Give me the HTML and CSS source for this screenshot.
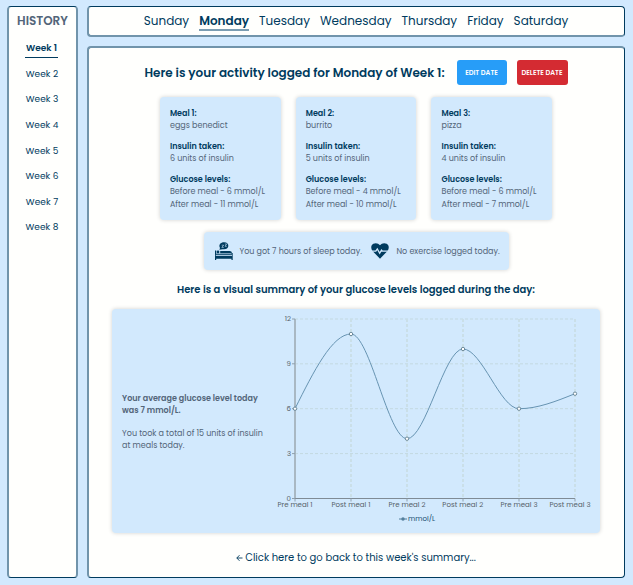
FILE: index.html
```html
<!DOCTYPE html>
<html lang="en">
<head>
<meta charset="utf-8">
<title>Glucose diary</title>
<link rel="stylesheet" href="styles.css">
</head>
<body>
<aside class="sidebar">
  <h2 class="history">HISTORY</h2>
  <ul class="weeks">
    <li><a class="week active">Week 1</a></li>
    <li><a class="week">Week 2</a></li>
    <li><a class="week">Week 3</a></li>
    <li><a class="week">Week 4</a></li>
    <li><a class="week">Week 5</a></li>
    <li><a class="week">Week 6</a></li>
    <li><a class="week">Week 7</a></li>
    <li><a class="week">Week 8</a></li>
  </ul>
</aside>
<div class="content">
  <nav class="days">
    <a>Sunday</a><a class="active">Monday</a><a>Tuesday</a><a>Wednesday</a><a>Thursday</a><a>Friday</a><a>Saturday</a>
  </nav>
  <main class="panel">
    <header class="heading">
      <h1>Here is your activity logged for Monday of Week 1:</h1>
      <button class="btn edit">EDIT DATE</button>
      <button class="btn delete">DELETE DATE</button>
    </header>
    <section class="meals">
      <article class="card meal">
        <h3>Meal 1:</h3><p>eggs benedict</p>
        <h3>Insulin taken:</h3><p>6 units of insulin</p>
        <h3>Glucose levels:</h3><p>Before meal - 6 mmol/L</p><p>After meal - 11 mmol/L</p>
      </article>
      <article class="card meal">
        <h3>Meal 2:</h3><p>burrito</p>
        <h3>Insulin taken:</h3><p>5 units of insulin</p>
        <h3>Glucose levels:</h3><p>Before meal - 4 mmol/L</p><p>After meal - 10 mmol/L</p>
      </article>
      <article class="card meal">
        <h3>Meal 3:</h3><p>pizza</p>
        <h3>Insulin taken:</h3><p>4 units of insulin</p>
        <h3>Glucose levels:</h3><p>Before meal - 6 mmol/L</p><p>After meal - 7 mmol/L</p>
      </article>
    </section>
    <section class="card habits">
      <svg class="icon-bed" viewBox="0 0 18 18">
        <path d="M0 8.4h1.2v3.4h15.3V10.9h1.2V18h-1.2v-1.2H1.2V18H0z"/>
        <circle cx="3" cy="10" r="1.4"/>
        <path d="M5.2 11.2V8.9h9.5q2 0 2.4 2.3z"/>
        <path d="M4.4 7.8 5 5.9C3.2 2.600 5.800.300 9 .300s4.700 1.700 4.300 4S10.800 7.800 7.500 7.200z"/>
        <path class="cut" d="M.8 13.300h16.300"/>
        <path class="cut zzz" d="M6.700 3.200h2L6.800 5.400h2M9.900 2h1.800L10 4.300h1.800"/>
      </svg>
      <p class="sleep">You got 7 hours of sleep today.</p>
      <svg class="icon-heart" viewBox="0 0 18 16">
        <path d="M9 15.700 1.500 8C-.5 5.500 0 2 2.300.8 4.700-.4 7.400.200 9 2.300 10.600.200 13.300-.4 15.700.8 18 2 18.500 5.500 16.500 8z"/>
        <path class="cut pulse" d="M0 8.200h4.800l1.500-2.300 2.400 4.300 1.800-3 .9 1H18"/>
      </svg>
      <p class="exercise">No exercise logged today.</p>
    </section>
    <h2 class="subtitle">Here is a visual summary of your glucose levels logged during the day:</h2>
    <section class="card summary">
      <div class="notes">
        <p class="average">Your average glucose level today<br>was 7 mmol/L.</p>
        <p class="total">You took a total of 15 units of insulin<br>at meals today.</p>
      </div>
      <svg class="chart" viewBox="275 309 325 224">
        <g class="grid">
          <path d="M295 319H575M295 363.800H575M295 408.700H575M295 453.600H575"/>
          <path class="vertical" d="M351 319V498.500M407 319V498.500M463 319V498.500M519 319V498.500M575 319V498.500"/>
        </g>
        <path class="axis-y" d="M295 319V498.500"/>
        <path class="axis-x" d="M295 498.500H575"/>
        <path class="ticks" d="M292 319h3M292 363.800h3M292 408.700h3M292 453.600h3M292 498.500h3M295 498.500v3M351 498.500v3M407 498.500v3M463 498.500v3M519 498.500v3M575 498.500v3"/>
        <path class="curve" d="M295 408.700C313.670 371.350 332.330 334 351 334S388.330 438.700 407 438.700 444.330 349 463 349 500.330 408.700 519 408.700 556.330 401.200 575 393.700"/>
        <g class="dots">
          <circle cx="295" cy="408.700" r="1.700"/><circle cx="351" cy="334" r="1.700"/><circle cx="407" cy="438.700" r="1.700"/><circle cx="463" cy="349" r="1.700"/><circle cx="519" cy="408.700" r="1.700"/><circle cx="575" cy="393.700" r="1.700"/>
        </g>
        <g class="labels-y">
          <text x="291" y="321.300">12</text><text x="291" y="366.300">9</text><text x="291" y="411.200">6</text><text x="291" y="456.100">3</text><text x="291" y="501">0</text>
        </g>
        <g class="labels-x">
          <text x="295" y="507" textLength="35">Pre meal 1</text><text x="351" y="507" textLength="39">Post meal 1</text><text x="407" y="507" textLength="37">Pre meal 2</text><text x="462.800" y="507" textLength="41">Post meal 2</text><text x="519" y="507" textLength="37">Pre meal 3</text><text x="570" y="507" textLength="41">Post meal 3</text>
        </g>
        <path class="legend-line" d="M399 519h8"/><circle class="legend-dot" cx="403" cy="519" r="1.700"/>
        <text class="legend" x="408" y="521.200" textLength="27">mmol/L</text>
      </svg>
    </section>
    <a class="back"><svg viewBox="0 0 7 8"><path d="M6.500 4H.8M3.500 1.200.8 4l2.700 2.800"/></svg><span>Click here to go back to this week's summary...</span></a>
  </main>
</div>
</body>
</html>
```
FILE: styles.css
```css
* { box-sizing: border-box; margin: 0; padding: 0; }
body {
  height: 585px;
  padding: 6px 8px 7px 7px;
  display: flex;
  gap: 9px;
  background: #d2e9fe;
  color: #003b5e;
  font-family: Poppins, Inter, sans-serif;
  overflow: hidden;
  white-space: nowrap;
}
.sidebar, .days, .panel { background: #fffffd; border-radius: 4px; }
.sidebar {
  width: 71px;
  border: solid #003b5e;
  border-width: 1px 2px;
  border-color: #003b5e #7194ab;
  text-align: center;
}
.history {
  margin-top: 6px;
  font-size: 12px;
  line-height: 16px;
  font-weight: 600;
  color: #536579;
}
.weeks { list-style: none; margin-top: 8.300px; }
.weeks li { height: 25.600px; display: flex; justify-content: center; align-items: flex-start; }
.week { width: 33px; height: 21px; padding-top: 4px; font-size: 9px; line-height: 14px; margin-right: 1px; letter-spacing: .06px; }
.week.active { font-weight: 600; letter-spacing: 0; border-bottom: 1px solid #003b5e; margin-right: 2px; }
.content { flex: 1; display: flex; flex-direction: column; gap: 9px; }
.days {
  height: 31px;
  display: flex;
  justify-content: center;
  gap: 10px;
  border: solid #003b5e;
  border-width: 1px 1px 2px 2px;
  border-color: #003b5e #003b5e #7194ab #7194ab;
  font-size: 12px;
  line-height: 18px;
  padding: 5px 1px 0 0;
}
.days a { height: 19px; }
.days .active { font-weight: 600; border-bottom: 2px solid #7b9db2; }
.panel {
  flex: 1;
  display: flex;
  flex-direction: column;
  align-items: center;
  padding-right: 1px;
  border: solid #003b5e;
  border-width: 2px 1px 1px 2px;
  border-color: #7194ab #003b5e #003b5e #7194ab;
}
.heading { margin-top: 11px; height: 26px; display: flex; align-items: center; }
h1 { width: 300px; font-size: 12px; font-weight: 600; line-height: 18px; margin-right: 12px; padding-top: 1px; }
.btn {
  height: 25px;
  border: 0;
  border-radius: 3px;
  color: #fff;
  font: 600 6.700px/25px Poppins, Inter, sans-serif;
}
.edit { width: 50px; background: #279df8; margin-right: 10px; }
.delete { width: 51px; background: #d42b32; }
.card { background: #d2e9fd; border-radius: 4px; box-shadow: 0 0 4px rgba(0, 0, 0, .18); }
.meals { display: flex; gap: 15.200px; margin-top: 12px; }
.meal { width: 120.600px; height: 123px; padding: 11px 10px 0; font-size: 8px; line-height: 12.300px; color: #536579; }
.meal h3 { font-size: 8px; font-weight: 600; color: #003b5e; }
.meal p + h3 { margin-top: 8.400px; }
.habits {
  width: 305px;
  height: 38px;
  margin-top: 12px;
  display: flex;
  align-items: center;
  padding-left: 11px;
  font-size: 8px;
  color: #536579;
}
.habits svg { fill: #003b5e; flex: none; }
.habits p { padding-top: 1px; }
.cut { fill: none; stroke: #d2e9fd; stroke-width: 1; }
.zzz { stroke-width: .6; }
.pulse { stroke-width: 1.300; }
.icon-bed { width: 18px; height: 18px; margin-right: 7px; }
.icon-heart { width: 18px; height: 16px; margin-right: 8px; }
.sleep { width: 131px; }
.subtitle { margin-top: 12px; font-size: 10px; font-weight: 600; line-height: 16px; }
.summary { width: 488px; height: 224px; margin: 11px 1px 0 0; display: flex; }
.notes { width: 163px; padding: 84px 0 0 10.600px; font-size: 8px; line-height: 12px; color: #536579; }
.average { font-weight: 600; margin-bottom: 11px; }
.chart { width: 325px; height: 224px; }
.grid { fill: none; stroke: #c3d9e1; stroke-width: 1; stroke-dasharray: 3 2; }
.vertical { stroke: #cadfe8; stroke-width: 2; }
.axis-y { stroke: #a9b8c3; stroke-width: 2; }
.axis-x { stroke: #7f8b95; stroke-width: 1; }
.ticks { stroke: #8f9fac; stroke-width: 1; }
.curve { fill: none; stroke: #6794b2; stroke-width: 1; }
.dots { fill: #fff; stroke: #537487; stroke-width: .8; }
.chart text { font-size: 7px; fill: #555f68; }
.labels-y { text-anchor: end; }
.labels-x { text-anchor: middle; }
.legend-line { stroke: #537f9c; stroke-width: 1; }
.legend-dot { fill: #537f9c; }
.chart .legend { fill: #174f72; }
.back { display: flex; align-items: center; gap: 2px; margin-top: 17px; font-size: 10px; line-height: 16px; }
.back svg { width: 7px; height: 8px; fill: none; stroke: #003b5e; stroke-width: .9; }
```
